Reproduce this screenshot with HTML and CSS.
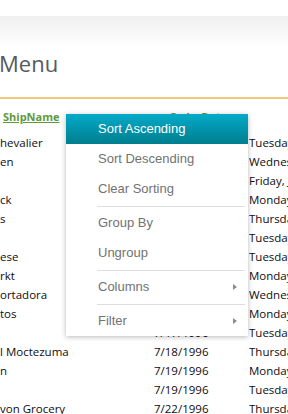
FILE: index.html
```html
<!DOCTYPE html>
<html lang="en">
<head>
    <meta charset="UTF-8">
    <meta name="viewport" content="width=device-width, initial-scale=1.0">
    <title>Menu</title>
    <link rel="stylesheet" href="styles.css">
</head>
<body>
    <div class="top-space"></div>
    <div class="title-bar">
        <h1>Menu</h1>
    </div>

    <div class="grid">
        <div class="grid-head">
            <div class="head-cell ship"><a href="#">ShipName</a></div>
            <div class="head-cell order"><a href="#">OrderDate</a></div>
            <div class="head-cell"></div>
        </div>
        <div class="grid-row"><span>hevalier</span><span>7/4/1996</span><span>Tuesday, July 16, 1996</span></div>
        <div class="grid-row"><span>en</span><span>7/5/1996</span><span>Wednesday, July 10, 1996</span></div>
        <div class="grid-row"><span></span><span>7/8/1996</span><span>Friday, July 12, 1996</span></div>
        <div class="grid-row"><span>ck</span><span>7/8/1996</span><span>Monday, July 15, 1996</span></div>
        <div class="grid-row"><span>s</span><span>7/9/1996</span><span>Thursday, July 11, 1996</span></div>
        <div class="grid-row"><span></span><span>7/10/1996</span><span>Tuesday, July 16, 1996</span></div>
        <div class="grid-row"><span>ese</span><span>7/11/1996</span><span>Tuesday, July 23, 1996</span></div>
        <div class="grid-row"><span>rkt</span><span>7/12/1996</span><span>Monday, July 15, 1996</span></div>
        <div class="grid-row"><span>ortadora</span><span>7/15/1996</span><span>Wednesday, July 17, 1996</span></div>
        <div class="grid-row"><span>tos</span><span>7/16/1996</span><span>Monday, July 22, 1996</span></div>
        <div class="grid-row"><span></span><span>7/17/1996</span><span>Tuesday, July 23, 1996</span></div>
        <div class="grid-row"><span>l Moctezuma</span><span>7/18/1996</span><span>Thursday, July 25, 1996</span></div>
        <div class="grid-row"><span>n</span><span>7/19/1996</span><span>Monday, July 29, 1996</span></div>
        <div class="grid-row"><span></span><span>7/19/1996</span><span>Tuesday, July 30, 1996</span></div>
        <div class="grid-row"><span>von Grocery</span><span>7/22/1996</span><span>Thursday, July 25, 1996</span></div>
    </div>

    <ul class="context-menu">
        <li class="item active">Sort Ascending</li>
        <li class="item">Sort Descending</li>
        <li class="item">Clear Sorting</li>
        <li class="separator"></li>
        <li class="item">Group By</li>
        <li class="item">Ungroup</li>
        <li class="separator"></li>
        <li class="item sub">Columns</li>
        <li class="separator"></li>
        <li class="item sub">Filter</li>
    </ul>
</body>
</html>
```

FILE: styles.css
```css
* {
    margin: 0;
    padding: 0;
    box-sizing: border-box;
}

html, body {
    overflow: hidden;
}

body {
    width: 288px;
    height: 414px;
    background: #fff;
    font-family: "Open Sans", sans-serif;
}

.top-space {
    height: 16px;
    background: #fff;
}

.title-bar {
    height: 83px;
    padding-top: 32px;
    background: linear-gradient(#f0f0f0, #fff 32px);
    border-bottom: 2px solid #f4c87c;
}

.title-bar h1 {
    font-size: 22px;
    line-height: 30px;
    font-weight: 400;
    color: #555960;
    margin-left: -1px;
}

.grid {
    width: 288px;
}

.grid-head,
.grid-row {
    display: grid;
    grid-template-columns: 154px 95px 1fr;
    white-space: nowrap;
}

.grid-head {
    height: 34px;
    padding-top: 10px;
    font-size: 11px;
    line-height: 15px;
    font-weight: 700;
}

.head-cell a {
    color: #5d9a3c;
}

.head-cell.ship {
    padding-left: 3px;
}

.head-cell.order {
    padding-left: 15px;
}

.grid-row {
    height: 19px;
    font-size: 11.5px;
    line-height: 19px;
    color: #100c10;
}

.grid-row span {
    overflow: hidden;
}

.context-menu {
    position: absolute;
    left: 66px;
    top: 114px;
    width: 182px;
    list-style: none;
    background: #fff;
    box-shadow: 0 1px 5px rgba(0,0,0,0.28);
    font-family: "Liberation Sans", Arial, sans-serif;
    font-size: 13px;
}

.context-menu .item {
    position: relative;
    height: 30px;
    line-height: 30px;
    padding-left: 32px;
    color: #727272;
}

.context-menu .item.active {
    background: linear-gradient(#04aac9, #007e8e);
    color: #fff;
}

.context-menu .item.sub::after {
    content: "";
    position: absolute;
    right: 11px;
    top: 12px;
    border-left: 4px solid #8c8c8c;
    border-top: 3.5px solid transparent;
    border-bottom: 3.5px solid transparent;
}

.context-menu .separator {
    height: 1px;
    margin: 2px 3px 1px 31px;
    background: #dedede;
}
```
